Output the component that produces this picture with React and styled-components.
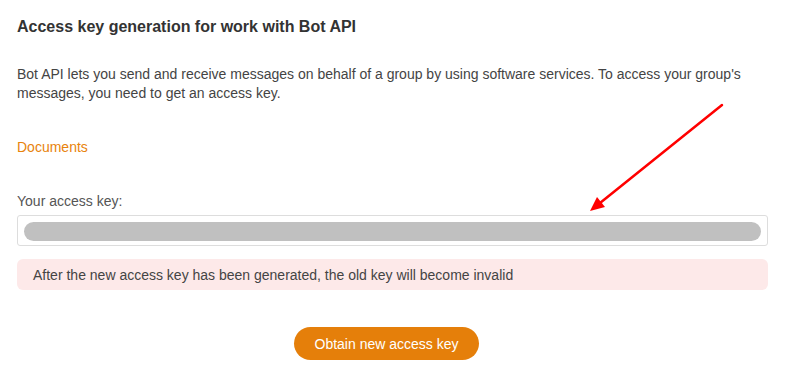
import React from "react";
import styled, { createGlobalStyle } from "styled-components";

const Global = createGlobalStyle`
  html, body { margin: 0; padding: 0; background: #fff; }
  body { font-family: "Liberation Sans", Arial, sans-serif; color: #333; }
`;

const Page = styled.div`
  position: relative;
  padding: 17px 17px 0 17px;
  width: 785px;
  box-sizing: border-box;
`;

const Title = styled.h1`
  margin: 0;
  font-size: 16px;
  font-weight: bold;
  line-height: 20px;
  color: #333;
`;

const Text = styled.p`
  margin: 28px 0 0 0;
  font-size: 14px;
  line-height: 19px;
  color: #444;
`;

const DocLink = styled.a`
  display: block;
  margin-top: 35px;
  font-size: 14px;
  line-height: 19px;
  color: #e8830c;
  text-decoration: none;
`;

const Label = styled.div`
  margin-top: 35px;
  font-size: 14px;
  line-height: 19px;
  color: #555;
`;

const KeyBox = styled.div`
  margin-top: 4px;
  height: 31px;
  border: 1px solid #ddd;
  border-radius: 3px;
  box-sizing: border-box;
  padding: 6px 6px 0 6px;
`;

const KeyMask = styled.div`
  height: 19px;
  border-radius: 10px;
  background: #c0c0c0;
`;

const Alert = styled.div`
  margin-top: 13px;
  height: 31px;
  box-sizing: border-box;
  padding: 0 16px;
  display: flex;
  align-items: center;
  background: #fde9e9;
  border-radius: 6px;
  font-size: 14px;
  color: #444;
`;

const Actions = styled.div`
  margin-top: 37px;
  display: flex;
  justify-content: center;
  padding-right: 12px;
`;

const Button = styled.button`
  height: 33px;
  padding: 0 21px;
  border: none;
  border-radius: 17px;
  background: #e57f0a;
  color: #fff;
  font-family: "Liberation Sans", Arial, sans-serif;
  font-size: 14px;
  cursor: pointer;
`;

const Arrow = styled.svg`
  position: absolute;
  left: 0;
  top: 0;
  pointer-events: none;
`;

export default function App() {
  return (
    <Page>
      <Global />
      <Title>Access key generation for work with Bot API</Title>
      <Text>
        Bot API lets you send and receive messages on behalf of a group by using software services. To access your group's
        messages, you need to get an access key.
      </Text>
      <DocLink href="#">Documents</DocLink>
      <Label>Your access key:</Label>
      <KeyBox>
        <KeyMask />
      </KeyBox>
      <Alert>After the new access key has been generated, the old key will become invalid</Alert>
      <Actions>
        <Button>Obtain new access key</Button>
      </Actions>
      <Arrow width="785" height="379" viewBox="0 0 785 379">
        <line x1="722" y1="105" x2="600" y2="203" stroke="#f00" strokeWidth="2.5" strokeLinecap="round" />
        <polygon points="590,211 597,197 605,207" fill="#f00" />
      </Arrow>
    </Page>
  );
}
